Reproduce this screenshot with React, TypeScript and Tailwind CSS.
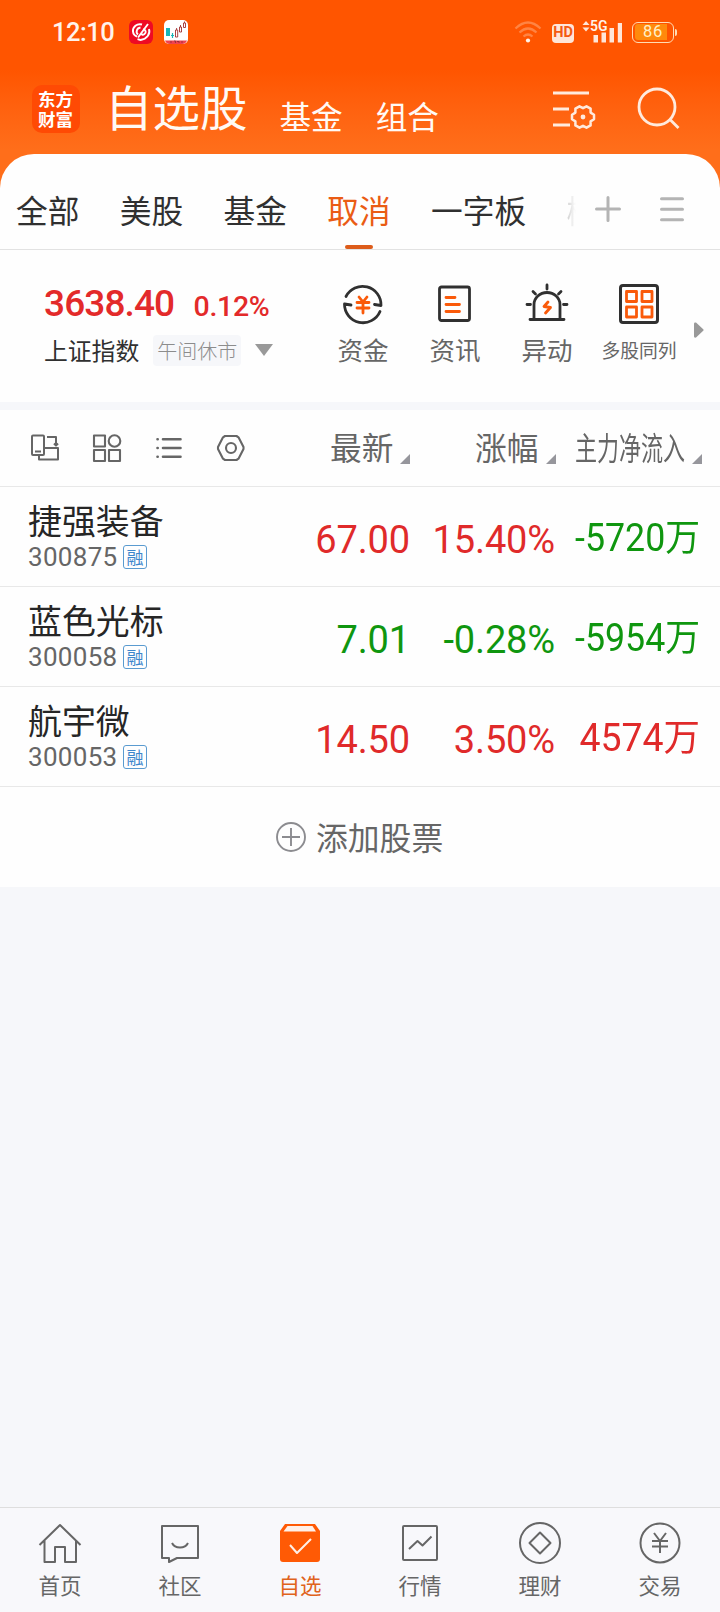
import type React from "react"

interface Stock {
  name: string
  code: string
  price: string
  change: string
  flow: string
  priceColor: string
  flowColor: string
}

const RED = "text-[#e02a2a]"
const GREEN = "text-[#0f960f]"

const stocks: Stock[] = [
  { name: "捷强装备", code: "300875", price: "67.00", change: "15.40%", flow: "-5720", priceColor: RED, flowColor: GREEN },
  { name: "蓝色光标", code: "300058", price: "7.01", change: "-0.28%", flow: "-5954", priceColor: GREEN, flowColor: GREEN },
  { name: "航宇微", code: "300053", price: "14.50", change: "3.50%", flow: "4574", priceColor: RED, flowColor: RED },
]

const StatusBar = () => (
  <div className="flex h-[64px] items-center pl-[52px] pr-[42px] text-[#fff3ea]">
    <span className="w-[77px] font-['Roboto'] text-[25.500px] font-medium leading-[64px] tracking-[-0.500px]">12:10</span>
    <svg width="24" height="24" viewBox="0 0 24 24" fill="none">
      <rect width="24" height="24" rx="6" fill="#ee0a24" />
      <path d="M13 4.500C8 3 3.500 7 4 11.500c.3 2.500 2 4.500 4 5" stroke="#fff" strokeWidth="2" />
      <path d="M20 9c1.500 5-2 10-8.500 11l-3-.8M19 4 9 17.500M11.500 7.500c-4 .5-5 5-2.500 7M14 9.500c3 0 3.500 3 1.500 4.500s-3.500.5-3-1" stroke="#fff" strokeWidth="1.900" />
    </svg>
    <svg className="ml-[11px]" width="24" height="24" viewBox="0 0 24 24" fill="none">
      <rect width="24" height="24" rx="5" fill="#fff" />
      <path d="M2 8h4v8H2z" fill="#18b6b8" />
      <path d="M8.500 13v5M7 15.500h3" stroke="#18b6b8" strokeWidth="1.200" />
      <path d="M11.500 10h2.200v7h-2.200zM15.500 7h2v5h-2zM19.500 3h2v4.500h-2zM12.600 8v2M16.500 5v2M20.500 1.500V3" stroke="#a03030" strokeWidth=".9" />
      <path d="M1 20.500h22c-.8 2.200-2.300 3.500-4.500 3.500h-13C3.300 24 1.800 22.700 1 20.500z" fill="#f0424e" />
      <path d="M6 22h2M10 21h1.500v2M13 21.500h2v1.500M17 22h2" stroke="#8b2d38" strokeWidth=".8" />
    </svg>
    <div className="ml-auto flex items-center">
      <svg width="28" height="24" viewBox="0 0 28 24" fill="none">
        <g stroke="#ff8443" strokeWidth="2.200">
          <path d="M1.500 8.500Q14-3.500 26.500 8.500" />
          <path d="M5.500 12.500Q14 4.500 22.500 12.500" />
          <path d="M9.500 16.500Q14 12.500 18.500 16.500" />
        </g>
        <circle cx="14" cy="20.500" r="2.100" fill="#fff3ea" />
      </svg>
      <span className="ml-[10px] mt-[2px] flex h-[19px] w-[22px] items-center justify-center rounded-[4px] bg-[#ffe6d8] font-['Roboto'] text-[14.500px] font-bold leading-none text-[#f45a10]">
        HD
      </span>
      <div className="relative ml-[7px] h-[24px] w-[42px]">
        <svg width="42" height="24" viewBox="0 0 42 24" fill="#ffe6d8">
          <path d="M5 1 8.500 5h-7zM5 11.500 1.500 7.500h7z" />
          <path d="M12.500 15H17v7.500h-4.500zM20.500 12.500H25v10h-4.500zM28.500 8H33v14.500h-4.500zM36.800 3H41v19.500h-4.200z" />
        </svg>
        <span className="absolute left-[9px] top-0 font-['Roboto'] text-[14px] font-semibold leading-[12px]">5G</span>
      </div>
      <div className="ml-[9px] mr-[1px] flex items-center">
        <div className="flex h-[21px] w-[42px] rounded-[6px] border-[1.500px] border-[#ffdcb4] p-[1.500px]">
          <div className="flex w-[32px] items-center justify-center rounded-l-[3px] bg-[#ff8a0c] pl-[5px] font-['Roboto'] text-[16.500px] leading-none tracking-[0.800px] text-[#fff0c8]">
            86
          </div>
        </div>
        <div className="ml-[1px] h-[7px] w-[2px] rounded-r bg-[#ffdcb4]" />
      </div>
    </div>
  </div>
)

const Header = () => (
  <div className="flex h-[90px] items-start pl-[32px] text-[#fffaf5]">
    <div className="mt-[21px] flex h-[48px] w-[48px] items-center justify-center rounded-[10px] bg-[#ff4a04]">
      <span className="w-[36px] break-all text-[17.500px] font-bold leading-[20px] text-white">东方财富</span>
    </div>
    <span className="ml-[25px] mt-[10px] text-[47.500px] leading-[64px]">自选股</span>
    <span className="ml-[32px] mt-[28px] text-[31.600px] leading-[46px]">基金</span>
    <span className="ml-[33px] mt-[28px] text-[31.600px] leading-[46px]">组合</span>
    <svg className="ml-[113px] mt-[24px]" width="44" height="42" viewBox="0 0 44 42" fill="none" stroke="#ffeadd" strokeWidth="2.800">
      <path d="M1 5h36M1 21h16M1 37h17" />
      <path
        d="M42 26.700v4.600l-3.400 2.100v4l-4.100 2.300-3.500-1.900-3.500 1.900-4.100-2.300v-4L20 31.300v-4.600l3.400-2.100v-4l4.100-2.300 3.500 1.900 3.500-1.900 4.100 2.300v4z"
        strokeWidth="2.500"
        strokeLinejoin="round"
      />
      <circle cx="31" cy="29" r="2.400" fill="#ffeadd" stroke="none" />
    </svg>
    <svg className="ml-[41px] mt-[23px]" width="44" height="44" viewBox="0 0 44 44" fill="none" stroke="#ffeadd" strokeWidth="2.800">
      <circle cx="20" cy="20" r="18" />
      <path d="m32.500 32 9 9" />
    </svg>
  </div>
)

const Tabs = () => (
  <div className="flex h-[96px] border-b border-[#e2e2e2] pl-[16px]">
    <div className="flex w-[560px] gap-[40.400px] overflow-hidden whitespace-nowrap text-[31.700px] leading-[110px] text-[#303030]">
      <span>全部</span>
      <span>美股</span>
      <span>基金</span>
      <span className="relative text-[#ea5c14]">
        取消
        <i className="absolute left-[18px] top-[91px] h-[4px] w-[28px] rounded-full bg-[#dd5c1a]" />
      </span>
      <span>一字板</span>
      <span className="bg-linear-to-r from-[#d0d0d0] to-[#fcfcfc] to-[8px] bg-clip-text text-transparent">概念</span>
    </div>
    <svg className="ml-[19px] mt-[42px]" width="26" height="26" stroke="#b4b4b4" strokeWidth="3" strokeLinecap="round">
      <path d="M13 1.500v23M1.500 13h23" />
    </svg>
    <svg className="ml-[38.500px] mt-[42px]" width="24" height="26" stroke="#b4b4b4" strokeWidth="3" strokeLinecap="round">
      <path d="M1.500 2.700h21M1.500 13.300h21M1.500 23.700h21" />
    </svg>
  </div>
)

const Action = ({ label, small, children }: { label: string; small?: boolean; children: React.ReactNode }) => (
  <div className="flex w-[92px] flex-col items-center text-[#666]">
    <svg width="44" height="44" viewBox="0 0 44 44" fill="none" stroke="#303030" strokeWidth="2.800" strokeLinecap="round" strokeLinejoin="round">
      {children}
    </svg>
    <span className={small ? "mt-[6px] whitespace-nowrap text-[18.800px] leading-[36px]" : "mt-[5px] text-[25.500px] leading-[36px]"}>{label}</span>
  </div>
)

const IndexPanel = () => (
  <div className="flex h-[152px]">
    <div className="w-[317px] pl-[44px]">
      <div className="mt-[30px] flex items-baseline font-['Roboto'] font-medium leading-[48px] text-[#e32a2a]">
        <span className="w-[149.500px] text-[37px] tracking-[-0.900px]">3638.40</span>
        <span className="text-[28.500px] tracking-[-0.300px]">0.12%</span>
      </div>
      <div className="mt-[3px] flex items-center">
        <span className="text-[23.800px] leading-[32px] text-[#303030]">上证指数</span>
        <span className="ml-[14px] h-[31px] w-[88px] rounded-[4px] bg-[#f6f7fa] text-center text-[20px] font-light leading-[31px] text-[#8c8c8c]">午间休市</span>
        <svg className="ml-[14px]" width="18" height="12" fill="#999">
          <path d="M0 0h18L9 12z" />
        </svg>
      </div>
    </div>
    <div className="flex pt-[32px]">
      <Action label="资金">
        <path d="M5 14.500A18.500 18.500 0 0 1 40 23.500l-6.500-1M39 29.500A18.500 18.500 0 0 1 3.500 22l6.500 1" />
        <path d="m18 15 4 5 4-5M22 20v11M16 20.500h12M16 26h12" stroke="#fa5a0a" />
      </Action>
      <Action label="资讯">
        <rect x="6.500" y="5" width="30" height="33.500" rx="2" />
        <path d="M13 15.500h9M13 22.500h13.500M13 29.500h13.500" stroke="#fa5a0a" />
      </Action>
      <Action label="异动">
        <path d="M5 37.500h34M9 37V22.500a13 12 0 0 1 26 0V37M22 3v4M8 9.500l2.500 2.500M36 9.500 33.500 12M2 22.500h3.500M38.500 22.500H42" />
        <path d="m23 20-4 4.500 6.500 1-5 5.500" stroke="#fa5a0a" />
      </Action>
      <Action label="多股同列" small>
        <rect x="3.500" y="3.500" width="37" height="37" rx="2.500" strokeWidth="3" />
        <path d="M9.500 9.500h10v10h-10zM25 9.500h10v10H25zM9.500 25h10v10h-10zM25 25h10v10H25z" stroke="#fa5a0a" />
      </Action>
    </div>
    <svg className="ml-[9px] mt-[72px]" width="10" height="16" fill="#999">
      <path d="M0 1.500Q0 0 2 .5L9.500 7.500v1L2 15.500Q0 16 0 14.500z" />
    </svg>
  </div>
)

const SortMark = () => (
  <svg className="mt-[22px]" width="10" height="10" fill="#96969c">
    <path d="M10 0v10H0z" />
  </svg>
)

const TableHead = () => (
  <div className="flex h-[77px] items-center border-b border-[#e8e8e8] pl-[30px] text-[31.700px] leading-[44px] text-[#666]">
    <svg width="30" height="30" viewBox="0 0 30 30" fill="none" stroke="#666" strokeWidth="2">
      <rect x="2" y="2.500" width="12" height="19.500" rx="1" />
      <path d="M5 18.500h6M17 4h9v9M24 10.500l2 2 2-2M14.500 15H28v11.500H9V22.500" strokeLinejoin="round" />
    </svg>
    <svg className="ml-[32px]" width="30" height="30" viewBox="0 0 30 30" fill="none" stroke="#666" strokeWidth="2.100">
      <path d="M2 2.500h11v11H2zM2 17h11v11H2zM17 17h11v11H17z" strokeLinejoin="round" />
      <circle cx="22.500" cy="8" r="5.800" />
    </svg>
    <svg className="ml-[33px]" width="28" height="30" viewBox="0 0 28 30" stroke="#666" strokeWidth="2.600" strokeLinecap="round">
      <path d="M8 6.300h17.500M8 15h17.500M8 23.700h17.500M2.500 6.300h.2M2.500 15h.2M2.500 23.700h.2" />
    </svg>
    <svg className="ml-[33px]" width="30" height="30" viewBox="0 0 30 30" fill="none" stroke="#666" strokeWidth="2.100">
      <path d="M9 3h11.500l2 1.300L27.500 14v2l-5 9.700-2 1.300H9l-2-1.300L2 16v-2L7 4.300z" strokeLinejoin="round" />
      <circle cx="15" cy="15" r="5" />
    </svg>
    <div className="ml-[84px] flex w-[80px] items-center justify-between">
      <span className="-mt-[4px]">最新</span>
      <SortMark />
    </div>
    <div className="ml-[65px] flex w-[81px] items-center justify-between">
      <span className="-mt-[4px]">涨幅</span>
      <SortMark />
    </div>
    <div className="ml-[19px] flex w-[127px] items-center justify-between">
      <span className="-mt-[4px] w-[110px] origin-left scale-x-[0.695] whitespace-nowrap">主力净流入</span>
      <SortMark />
    </div>
  </div>
)

const StockRow = ({ stock }: { stock: Stock }) => (
  <div className="flex h-[100px] items-center border-b border-[#e8e8e8] pl-[28px] pr-[20px] font-['Roboto']">
    <div className="w-[220px] font-['Noto_Sans_CJK_SC',sans-serif]">
      <div className="-mt-[5px] text-[33.900px] leading-[44px] text-[#262626]">{stock.name}</div>
      <div className="mt-[1px] flex h-[28px] items-center">
        <span className="w-[95px] font-['Roboto'] text-[26px] leading-[28px] tracking-[0.300px] text-[#666]">{stock.code}</span>
        <span className="flex h-[24px] w-[24px] items-center justify-center rounded-[3px] border-[1.500px] border-[#5a9bd0] text-[17px] leading-none text-[#3c86cc]">融</span>
      </div>
    </div>
    <div className={`mt-[6px] w-[162px] text-right text-[38px] leading-[50px] tracking-[-0.150px] ${stock.priceColor}`}>{stock.price}</div>
    <div className={`mt-[6px] w-[145px] text-right text-[38px] leading-[50px] tracking-[-0.150px] ${stock.priceColor}`}>{stock.change}</div>
    <div
      className={`-mt-[1px] flex w-[145px] origin-right items-baseline justify-end text-[38px] leading-[50px] ${stock.flowColor} ${
        stock.flow.startsWith("-") ? "scale-x-[0.940]" : "scale-x-[0.985]"
      }`}
    >
      <span>{stock.flow}</span>
      <span className="font-['Noto_Sans_CJK_SC',sans-serif] text-[37px]">万</span>
    </div>
  </div>
)

const navItems = [
  {
    label: "首页",
    icon: <path d="m1.500 24 20.500-20 20.500 20M6.500 19v22h10.500V26h10v15h11V19" />,
  },
  {
    label: "社区",
    icon: <path d="M4 5h36v32H19l-8 4v-4H4zM14 22c3 6 13 6 16 0" />,
  },
  {
    label: "自选",
    icon: (
      <>
        <path d="M7 3h30l5 7v28a3 3 0 0 1-3 3H5a3 3 0 0 1-3-3V10z" fill="#ff5a05" stroke="none" />
        <path d="M9.500 5h25l3.500 5.500H5.500z" fill="#fff0e8" stroke="none" />
        <path d="m12 24 7 8 14-14" stroke="#fff0e8" />
      </>
    ),
  },
  {
    label: "行情",
    icon: (
      <>
        <rect x="5" y="5" width="34" height="34" rx="1" />
        <path d="m11 28 8.500-8 5 4.500 9-9" />
      </>
    ),
  },
  {
    label: "理财",
    icon: (
      <>
        <circle cx="22" cy="22" r="20" />
        <path d="m22 11.500 10.500 10.500L22 32.500 11.500 22z" />
      </>
    ),
  },
  {
    label: "交易",
    icon: (
      <>
        <circle cx="22" cy="22" r="19.500" />
        <path d="m16 12 6 8 6-8M22 20v12M14 20h16M14 25.500h16" />
      </>
    ),
  },
]

const BottomNav = () => (
  <div className="flex h-[105px] border-t border-[#dedede] bg-[#f8f8fb] pt-[13px]">
    {navItems.map((item) => (
      <div key={item.label} className={`flex flex-1 flex-col items-center ${item.label === "自选" ? "text-[#e0631c]" : "text-[#666]"}`}>
        <svg width="44" height="44" viewBox="0 0 44 44" fill="none" stroke="#666" strokeWidth="2" strokeLinejoin="round">
          {item.icon}
        </svg>
        <span className="mt-[5px] text-[21.500px] leading-[30px]">{item.label}</span>
      </div>
    ))}
  </div>
)

const App = () => {
  return (
    <div className="flex h-[1612px] w-[720px] flex-col overflow-hidden bg-[#f6f7fa] font-['Noto_Sans_CJK_SC',sans-serif]">
      <div className="h-[194px] shrink-0 bg-linear-to-b from-[#ff5500] from-[70px] to-[#ff6e1a] to-[150px]">
        <StatusBar />
        <Header />
      </div>
      <div className="-mt-[40px] rounded-t-[34px] bg-[#fefefe]">
        <Tabs />
        <IndexPanel />
      </div>
      <div className="mt-[8px] bg-[#fefefe]">
        <TableHead />
        {stocks.map((stock) => (
          <StockRow key={stock.code} stock={stock} />
        ))}
        <div className="flex h-[100px] items-center pl-[276px]">
          <svg width="30" height="30" viewBox="0 0 30 30" fill="none" stroke="#8c8c90" strokeWidth="1.900">
            <circle cx="15" cy="15" r="14" />
            <path d="M15 6v18M6 15h18" />
          </svg>
          <span className="-mt-[2px] ml-[10px] text-[31.800px] leading-[44px] text-[#666]">添加股票</span>
        </div>
      </div>
      <div className="flex-1" />
      <BottomNav />
    </div>
  )
}

export default App
